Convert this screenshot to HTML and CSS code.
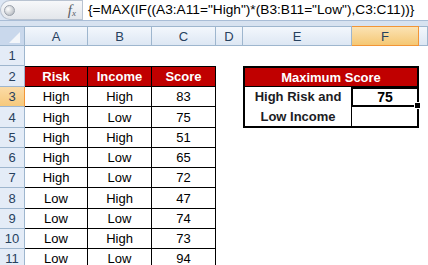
FILE: index.html
```html
<!DOCTYPE html>
<html lang="en">
<head>
    <meta charset="UTF-8">
    <title>Maximum Score</title>
    <link rel="stylesheet" href="styles.css">
</head>
<body>
    <div class="formula-bar">
        <div class="fx-box">
            <span class="knob"></span>
            <span class="fx">f<sub>x</sub></span>
        </div>
        <div class="formula">{=MAX(IF((A3:A11="High")*(B3:B11="Low"),C3:C11))}</div>
    </div>
    <div class="band"></div>

    <div class="sheet">
        <!-- column headers -->
        <div class="corner">
            <svg width="24" height="19" viewBox="0 0 24 19"><polygon points="20,5 20,16 9,16" fill="#f3f6fa"/></svg>
        </div>
        <div class="col-head">A</div>
        <div class="col-head">B</div>
        <div class="col-head">C</div>
        <div class="col-head">D</div>
        <div class="col-head">E</div>
        <div class="col-head active">F</div>
        <div class="col-head"></div>

        <!-- row 1 -->
        <div class="row-head">1</div>
        <div></div><div></div><div></div><div></div><div></div><div></div><div></div>

        <!-- row 2 -->
        <div class="row-head">2</div>
        <div class="cell th top">Risk</div>
        <div class="cell th top">Income</div>
        <div class="cell th top">Score</div>
        <div></div>
        <div class="max-head">Maximum Score</div>
        <div></div>

        <!-- row 3 -->
        <div class="row-head active">3</div>
        <div class="cell">High</div>
        <div class="cell">High</div>
        <div class="cell">83</div>
        <div></div>
        <div class="max-label">High Risk and<br>Low Income</div>
        <div class="max-value">75<span class="handle"></span></div>
        <div></div>

        <!-- row 4 -->
        <div class="row-head">4</div>
        <div class="cell">High</div>
        <div class="cell">Low</div>
        <div class="cell">75</div>
        <div></div>
        <div class="max-empty"></div>
        <div></div>

        <div class="row-head">5</div>
        <div class="cell">High</div>
        <div class="cell">High</div>
        <div class="cell">51</div>
        <div></div><div></div><div></div><div></div>

        <div class="row-head">6</div>
        <div class="cell">High</div>
        <div class="cell">Low</div>
        <div class="cell">65</div>
        <div></div><div></div><div></div><div></div>

        <div class="row-head">7</div>
        <div class="cell">High</div>
        <div class="cell">Low</div>
        <div class="cell">72</div>
        <div></div><div></div><div></div><div></div>

        <div class="row-head">8</div>
        <div class="cell">Low</div>
        <div class="cell">High</div>
        <div class="cell">47</div>
        <div></div><div></div><div></div><div></div>

        <div class="row-head">9</div>
        <div class="cell">Low</div>
        <div class="cell">Low</div>
        <div class="cell">74</div>
        <div></div><div></div><div></div><div></div>

        <div class="row-head">10</div>
        <div class="cell">Low</div>
        <div class="cell">High</div>
        <div class="cell">73</div>
        <div></div><div></div><div></div><div></div>

        <div class="row-head">11</div>
        <div class="cell">Low</div>
        <div class="cell">Low</div>
        <div class="cell">94</div>
        <div></div><div></div><div></div><div></div>
    </div>
</body>
</html>
```

FILE: styles.css
```css
body {
    margin: 0;
    width: 428px;
    height: 265px;
    overflow: hidden;
    background: #ffffff;
    font-family: "Liberation Sans", Arial, sans-serif;
    font-size: 13px;
    color: #000000;
}

/* formula bar */
.formula-bar {
    display: flex;
    height: 20px;
    background: #dce6f4;
    border-bottom: 1px solid #a9bdd6;
}
.fx-box {
    width: 82px;
    display: flex;
    align-items: center;
    justify-content: space-between;
    padding: 0 6px 0 3px;
    box-sizing: border-box;
    background: linear-gradient(#f7f8fa, #e3e6eb);
    border: 1px solid #b9c3d1;
    border-right: none;
    border-radius: 10px 0 0 10px;
}
.knob {
    width: 9px;
    height: 9px;
    border-radius: 50%;
    background: radial-gradient(circle at 35% 35%, #ffffff, #a8adb5);
    border: 1px solid #9aa1ab;
}
.fx {
    font-family: "Liberation Serif", serif;
    font-style: italic;
    font-size: 15px;
    color: #5a5f66;
    line-height: 1;
}
.fx sub {
    font-size: 9px;
    vertical-align: -1px;
}
.formula {
    flex: 1;
    background: #ffffff;
    border-left: 1px solid #b9c3d1;
    padding-left: 5px;
    line-height: 20px;
    font-size: 13.7px;
    white-space: nowrap;
    overflow: hidden;
}
.band {
    height: 5px;
    background: #d7e2f0;
}

/* grid */
.sheet {
    display: grid;
    grid-template-columns: 25px 63px 64px 64px 27px 109px 67px 9px;
    grid-template-rows: 20px 20px 21px 20px 21px 20px 20px 20px 21px 20px 20px 20px;
}
.sheet > div {
    box-sizing: border-box;
}
.corner {
    background: #c9d8ec;
    border-right: 1px solid #9eb6ce;
    border-bottom: 1px solid #9eb6ce;
    border-top: 1px solid #9eb6ce;
}
.corner svg {
    display: block;
}
.col-head {
    display: flex;
    align-items: center;
    justify-content: center;
    background: linear-gradient(#f3f7fc, #dde7f3);
    border-top: 1px solid #9eb6ce;
    border-right: 1px solid #9eb6ce;
    border-bottom: 1px solid #9eb6ce;
    color: #27415e;
}
.col-head.active {
    background: linear-gradient(#fbe3b4, #f5c874);
    border: 1px solid #f29536;
    border-left: none;
}
.row-head {
    display: flex;
    align-items: center;
    justify-content: center;
    background: #e4ecf7;
    border-right: 1px solid #9eb6ce;
    border-bottom: 1px solid #9eb6ce;
    color: #27415e;
}
.row-head.active {
    background: linear-gradient(#fbdba6, #f6c97c);
    border-right: 1px solid #f29536;
}

/* data table */
.cell {
    display: flex;
    align-items: center;
    justify-content: center;
    border-right: 1px solid #000000;
    border-bottom: 1px solid #000000;
}
.cell.top {
    border-top: 1px solid #000000;
}
.cell.th {
    background: #c00000;
    color: #ffffff;
    font-weight: bold;
}

/* result box */
.max-head {
    grid-column: span 2;
    display: flex;
    align-items: center;
    justify-content: center;
    background: #c00000;
    color: #ffffff;
    font-weight: bold;
    border: 2px solid #000000;
    border-bottom: 1px solid #000000;
}
.max-label {
    grid-row: span 2;
    display: flex;
    align-items: center;
    justify-content: center;
    text-align: center;
    line-height: 20px;
    font-weight: bold;
    color: #1c1c24;
    border-left: 2px solid #000000;
    border-right: 1px solid #000000;
    border-bottom: 2px solid #000000;
}
.max-value {
    position: relative;
    display: flex;
    align-items: center;
    justify-content: center;
    font-weight: bold;
    font-size: 14px;
    border: 2px solid #000000;
    border-left-width: 1px;
}
.handle {
    position: absolute;
    right: -4px;
    bottom: -4px;
    width: 5px;
    height: 5px;
    background: #000000;
    border: 1px solid #ffffff;
}
.max-empty {
    border-right: 2px solid #000000;
    border-bottom: 2px solid #000000;
}
```
